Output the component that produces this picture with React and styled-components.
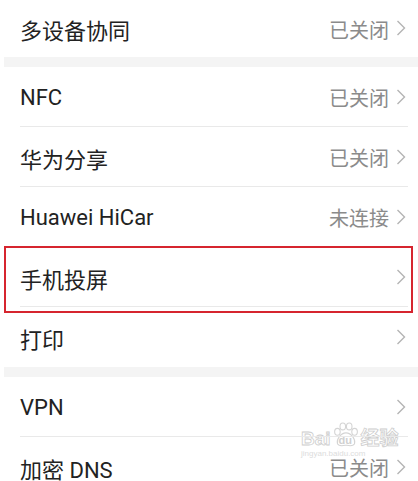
import React from 'react';
import styled, { createGlobalStyle } from 'styled-components';

const GlobalStyle = createGlobalStyle`
  html, body {
    margin: 0;
    padding: 0;
    background: #fff;
  }
  body {
    font-family: Roboto, "Noto Sans CJK SC", "Noto Sans", sans-serif;
  }
`;

const groups = [
  [{ label: '多设备协同', value: '已关闭', first: true }],
  [
    { label: 'NFC', value: '已关闭' },
    { label: '华为分享', value: '已关闭' },
    { label: 'Huawei HiCar', value: '未连接' },
    { label: '手机投屏', highlighted: true },
    { label: '打印' },
  ],
  [
    { label: 'VPN' },
    { label: '加密 DNS', value: '已关闭' },
  ],
];

const Chevron = () => (
  <svg width="10" height="16" viewBox="0 0 10 16">
    <polyline points="1.5,1 8.5,8 1.5,15" fill="none" stroke="#b4b4b4" strokeWidth="1.4" />
  </svg>
);

const PawLogo = () => (
  <svg width="30" height="26" viewBox="0 0 28 24">
    <g fill="#fff" stroke="#d4d4d4" strokeWidth="1">
      <ellipse cx="6" cy="9" rx="2.6" ry="3.2" />
      <ellipse cx="11" cy="4" rx="2.6" ry="3.2" />
      <ellipse cx="17" cy="4" rx="2.6" ry="3.2" />
      <ellipse cx="22" cy="9" rx="2.6" ry="3.2" />
      <path d="M14 10 C 9 10 5 16 6 20 C 7 23 11 22 14 21.5 C 17 22 21 23 22 20 C 23 16 19 10 14 10 Z" />
    </g>
  </svg>
);

export default function App() {
  return (
    <Page>
      <GlobalStyle />
      <Watermark>
        <MarkTop>
          <MarkWord>Bai</MarkWord>
          <PawBox>
            <PawLogo />
            <PawText>du</PawText>
          </PawBox>
          <MarkWord>经验</MarkWord>
        </MarkTop>
        <MarkUrl>jingyan.baidu.com</MarkUrl>
      </Watermark>
      <List>
        {groups.map((rows, gi) => (
          <React.Fragment key={gi}>
            {gi > 0 && <Band />}
            {rows.map((row, ri) => (
              <Row key={row.label} $first={row.first} $highlighted={row.highlighted}>
                <Inner $last={ri === rows.length - 1}>
                  <Label>{row.label}</Label>
                  <Right>
                    {row.value && <Value>{row.value}</Value>}
                    <Chevron />
                  </Right>
                </Inner>
              </Row>
            ))}
          </React.Fragment>
        ))}
      </List>
    </Page>
  );
}

const Page = styled.div`
  position: relative;
  width: 418px;
  height: 481px;
  overflow: hidden;
  background: #fff;
`;

const List = styled.div`
  position: relative;
  z-index: 1;
  display: flex;
  flex-direction: column;
`;

const Band = styled.div`
  height: 10px;
  margin-left: 4px;
  background: #f4f4f4;
`;

const Row = styled.div`
  position: relative;
  display: flex;
  height: ${props => (props.$first ? '57px' : '60px')};
  padding-left: 20px;
  box-sizing: border-box;

  &::after {
    content: '';
    display: ${props => (props.$highlighted ? 'block' : 'none')};
    position: absolute;
    left: 4px;
    right: 5px;
    top: -1px;
    bottom: -6px;
    border: 2px solid #d6252f;
    pointer-events: none;
  }
`;

const Inner = styled.div`
  flex: 1;
  display: flex;
  align-items: center;
  justify-content: space-between;
  margin-right: 10px;
  padding-right: 2px;
  border-bottom: 1px solid ${props => (props.$last ? 'transparent' : '#e9e9e9')};
`;

const Label = styled.span`
  font-size: 22px;
  color: #222;
  padding-top: 2px;
`;

const Right = styled.div`
  display: flex;
  align-items: center;
  gap: 7px;
`;

const Value = styled.span`
  font-size: 20px;
  color: #8b8b8b;
  padding-top: 2px;
`;

const Watermark = styled.div`
  position: absolute;
  left: 301px;
  top: 422px;
  z-index: 0;
  display: flex;
  flex-direction: column;
  pointer-events: none;
`;

const MarkTop = styled.div`
  display: flex;
  align-items: flex-end;
`;

const MarkWord = styled.span`
  font-family: "Liberation Sans", "Noto Sans CJK SC", sans-serif;
  font-size: 19px;
  font-weight: bold;
  line-height: 18px;
  color: #fff;
  -webkit-text-stroke: 0.8px #cdcdcd;
`;

const PawBox = styled.div`
  position: relative;
  width: 30px;
  height: 26px;
`;

const PawText = styled.span`
  position: absolute;
  left: 8px;
  top: 12px;
  font-family: "Liberation Sans", sans-serif;
  font-size: 11px;
  font-weight: bold;
  color: #d0d0d0;
`;

const MarkUrl = styled.span`
  font-family: "Liberation Sans", sans-serif;
  font-size: 8px;
  color: #dcdcdc;
  margin-top: 1px;
`;
